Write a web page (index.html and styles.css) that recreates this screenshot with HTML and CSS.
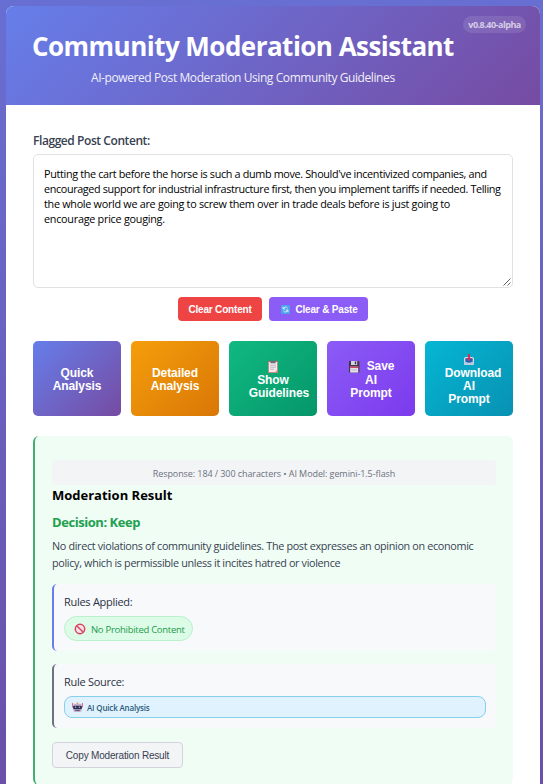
FILE: index.html
```html
<!DOCTYPE html>
<html lang="en">
<head>
<meta charset="utf-8">
<title>Community Moderation Assistant</title>
<link rel="stylesheet" href="styles.css">
</head>
<body>
<main class="app">
  <header class="header">
    <span class="version">v0.8.40-alpha</span>
    <h1 class="title"><span>Community Moderation Assistant</span></h1>
    <p class="subtitle"><span>AI-powered Post Moderation Using Community Guidelines</span></p>
  </header>
  <section class="content">
    <div class="label"><span>Flagged Post Content:</span></div>
    <div class="post">
      <span class="line l1">Putting the cart before the horse is such a dumb move. Should've incentivized companies, and</span>
      <span class="line l2">encouraged support for industrial infrastructure first, then you implement tariffs if needed. Telling</span>
      <span class="line l3">the whole world we are going to screw them over in trade deals before is just going to</span>
      <span class="line l4">encourage price gouging.</span>
      <svg class="grip" viewBox="0 0 8 8"><path d="M.5 7.5l7-7M4.5 7.5l3-3" stroke="#555" stroke-width=".9"/></svg>
    </div>
    <div class="tools">
      <button class="small red">Clear Content</button>
      <button class="small violet"><svg class="ic-refresh" viewBox="0 0 10 10"><rect width="10" height="10" rx="1" fill="#4ba3ec"/><path d="M7.3 3.4A2.6 2.6 0 0 0 2.6 4.2M2.3 2v2.4h2.4M2.7 6.6a2.6 2.6 0 0 0 4.7-.8M7.7 8V5.6H5.3" fill="none" stroke="#e8f5ff" stroke-width="1"/></svg>Clear &amp; Paste</button>
    </div>
    <div class="actions">
      <button class="action quick">Quick<br>Analysis</button>
      <button class="action detailed">Detailed<br>Analysis</button>
      <button class="action show"><svg class="ic" viewBox="0 0 12 13"><rect x="1" y="1" width="10" height="12" rx=".6" fill="#b87969"/><rect x="1.8" y="2" width="8.4" height="10.2" fill="#eeeaf0"/><rect x="3.4" y=".4" width="5.2" height="2.8" rx=".5" fill="#6d7078"/><path d="M3 5.2h6M3 7.2h6M3 9.2h4" stroke="#aaa8b4" stroke-width=".7"/><path d="M8 12.2l2.2-2.4v2.4z" fill="#e4946b"/></svg><br>Show<br><span class="nudge-r">Guidelines</span></button>
      <button class="action save"><span class="row"><svg class="ic" viewBox="0 0 12 13"><path d="M1 1h9.4l1 1v10.5H1z" fill="#40364b"/><rect x="3" y="1" width="6.2" height="4" fill="#d6d3df"/><rect x="6.8" y="1.5" width="1.4" height="2.8" fill="#40364b"/><rect x="2.2" y="6.6" width="8" height="5.9" fill="#eee9f2"/><rect x="2.2" y="6.6" width="8" height="1.3" fill="#cc3552"/><path d="M3.2 9.2h6M3.2 10.8h6" stroke="#aaa4b6" stroke-width=".6"/></svg>Save</span>AI<br>Prompt</button>
      <button class="action download"><svg class="ic" viewBox="0 0 12 13"><path d="M1 5l1.5-1h7L11 5v7H1z" fill="#d8dce8"/><path d="M2.3 5.2h7.4v4.5H2.3z" fill="#2467b3"/><path d="M1 9h2.5l1 1.3h3L8.5 9H11v3H1z" fill="#b7cbe2"/><path d="M5 1h2v4h1.5L6 8.2 3.5 5H5z" fill="#d32f58"/></svg><br><span class="nudge-d">Download</span><br>AI<br>Prompt</button>
    </div>
    <article class="result">
      <div class="stats"><span>Response: 184 / 300 characters • AI Model: gemini-1.5-flash</span></div>
      <h2 class="heading"><span>Moderation Result</span></h2>
      <h3 class="decision"><span>Decision: Keep</span></h3>
      <p class="reason"><span class="line">No direct violations of community guidelines. The post expresses an opinion on economic</span><span class="line">policy, which is permissible unless it incites hatred or violence</span></p>
      <div class="box rules">
        <div class="box-title"><span>Rules Applied:</span></div>
        <div class="tag"><svg class="ic-ban" viewBox="0 0 12 12"><circle cx="6" cy="6" r="4.7" fill="#f4e4e8" stroke="#d94360" stroke-width="1.5"/><path d="M2.7 2.7l6.6 6.6" stroke="#d94360" stroke-width="1.5"/></svg><span>No Prohibited Content</span></div>
      </div>
      <div class="box source">
        <div class="box-title"><span>Rule Source:</span></div>
        <div class="tag-wide"><svg class="ic-bot" viewBox="0 0 12 12"><rect x="1.5" y="2" width="9" height="9" rx="1.6" fill="#c5b2cf"/><path d="M.6 1v5M11.4 1v5" stroke="#d8587d" stroke-width="1"/><circle cx="6" cy="1.3" r="1" fill="#ee9a64"/><rect x="1.2" y="4" width="9.6" height="3.8" rx="1.3" fill="#352e52"/><circle cx="3.9" cy="5.7" r=".8" fill="#79cdf3"/><circle cx="8.1" cy="5.7" r=".8" fill="#79cdf3"/><path d="M3.5 9.3h5" stroke="#61506f" stroke-width="1"/></svg><span>AI Quick Analysis</span></div>
      </div>
      <button class="copy">Copy Moderation Result</button>
    </article>
  </section>
</main>
</body>
</html>
```
FILE: styles.css
```css
* { box-sizing: border-box; }
html { height: 784px; overflow: hidden; }
body {
  margin: 0;
  height: 784px;
  padding: 6px 3px 0 6px;
  overflow: hidden;
  background: linear-gradient(180deg, #686fd2 0%, #6a50a8 100%);
  font-family: "Open Sans", "Noto Sans", sans-serif;
  color: #374151;
}
h1, h2, h3, p { margin: 0; }
span { white-space: nowrap; }
button { border: 0; padding: 0; font-family: "Liberation Sans", Arial, sans-serif; color: #fff; }
svg { display: inline-block; }

.app { width: 534px; height: 800px; background: #fff; border-radius: 8px 8px 0 0; overflow: hidden; }

.header {
  position: relative;
  height: 99px;
  padding-top: 20px;
  background: linear-gradient(135deg, #667eea 0%, #764ba2 100%);
  color: #fff;
}
.title { padding-left: 26px; font-size: 26px; line-height: 40px; font-weight: 700; letter-spacing: -0.53px; }
.subtitle { margin-top: 3px; padding-left: 85px; font-size: 12px; line-height: 18px; opacity: .9; letter-spacing: -0.41px; }
.version {
  position: absolute;
  top: 10px;
  right: 14px;
  width: 63px;
  height: 17px;
  border-radius: 9px;
  background: rgba(255, 255, 255, .1);
  color: rgba(255, 255, 255, .68);
  font-size: 9px;
  line-height: 17px;
  font-weight: 700;
  text-align: center;
  letter-spacing: -0.5px;
}

.content { padding: 27px 27px 0; }
.label { height: 22px; font-size: 12px; line-height: 18px; font-weight: 600; letter-spacing: -0.43px; }
.post {
  position: relative;
  height: 134px;
  padding: 11px 10px;
  border: 1px solid #dfe1e5;
  border-radius: 5px;
  font-size: 10.8px;
  line-height: 15px;
  color: #000;
}
.line { display: block; }
.l1 { letter-spacing: -0.33px; }
.l2 { letter-spacing: -0.36px; }
.l3 { letter-spacing: -0.28px; }
.l4 { letter-spacing: -0.25px; }
.grip { position: absolute; right: 1px; bottom: 1px; width: 8px; height: 8px; }

.tools { display: flex; gap: 7px; margin: 9px 0 20px 145px; }
.small { height: 24px; padding-top: 1px; border-radius: 4px; font-size: 10px; font-weight: 700; letter-spacing: -0.18px; display: flex; align-items: center; justify-content: center; }
.red { width: 84px; background: #ef4444; }
.violet { width: 99px; padding-left: 2px; background: #8b5cf6; }
.ic-refresh { width: 9px; height: 9px; margin-right: 5px; }

.actions { display: grid; grid-template-columns: repeat(5, 88px); gap: 10px; }
.action {
  height: 75px;
  padding: 2px 0 0;
  border-radius: 5px;
  font-size: 12px;
  line-height: 13px;
  font-weight: 700;
  text-align: center;
  letter-spacing: -0.1px;
}
.quick { background: linear-gradient(135deg, #667eea, #764ba2); }
.detailed { background: linear-gradient(135deg, #f59e0b, #d97706); }
.show { background: linear-gradient(135deg, #10b981, #059669); }
.save { background: linear-gradient(135deg, #8b5cf6, #7c3aed); }
.download { background: linear-gradient(135deg, #06b6d4, #0891b2); }
.ic { width: 12px; height: 13px; vertical-align: -2px; }
.row { display: flex; justify-content: center; gap: 7px; height: 14px; }
.nudge-r { padding-left: 12px; }
.nudge-d { padding-left: 8px; }

.result {
  height: 349px;
  margin-top: 20px;
  padding: 24px 17px 0;
  border-left: 2px solid #43ae72;
  border-radius: 6px;
  background: #f0fdf4;
}
.stats { height: 25px; border-radius: 3px; background: #f3f4f6; font-size: 9px; line-height: 27px; text-align: center; color: #6b7280; font-weight: 500; letter-spacing: -0.08px; }
.heading { font-size: 13px; line-height: 20px; font-weight: 700; color: #000; }
.decision { margin-top: 7px; font-size: 13px; line-height: 20px; font-weight: 700; color: #22a04f; letter-spacing: -0.45px; }
.reason { margin-top: 5px; height: 47px; font-size: 10.8px; line-height: 17px; letter-spacing: -0.33px; }
.box { padding: 9px 10px 0; border-left: 2px solid #667eea; border-radius: 5px; background: #f8f9fb; }
.rules { height: 67px; }
.source { height: 64px; margin-top: 13px; border-left-color: #6b7280; }
.box-title { height: 23px; font-size: 11px; line-height: 18px; font-weight: 500; color: #2b323f; letter-spacing: -0.28px; }
.tag {
  display: flex;
  align-items: center;
  width: 129px;
  height: 25px;
  padding: 1px 0 0 9px;
  border: 1px solid #bbf0cc;
  border-radius: 13px;
  background: #dcfce7;
  color: #1f9a4b;
  font-size: 9.5px;
  font-weight: 500;
  letter-spacing: -0.28px;
}
.ic-ban { width: 12px; height: 12px; margin-right: 5px; }
.tag-wide {
  display: flex;
  align-items: center;
  height: 22px;
  padding: 1px 0 0 7px;
  border: 1px solid #86d0ed;
  border-radius: 8px;
  background: #e0f2fe;
  color: #2b5c7c;
  font-size: 8px;
  font-weight: 600;
  letter-spacing: -0.18px;
}
.ic-bot { width: 11px; height: 11px; margin-right: 4px; }
.copy {
  display: block;
  width: 131px;
  height: 26px;
  margin-top: 14px;
  border: 1px solid #d1d5db;
  border-radius: 4px;
  background: #f3f4f6;
  color: #374151;
  font-size: 10px;
  letter-spacing: -0.18px;
}
```
